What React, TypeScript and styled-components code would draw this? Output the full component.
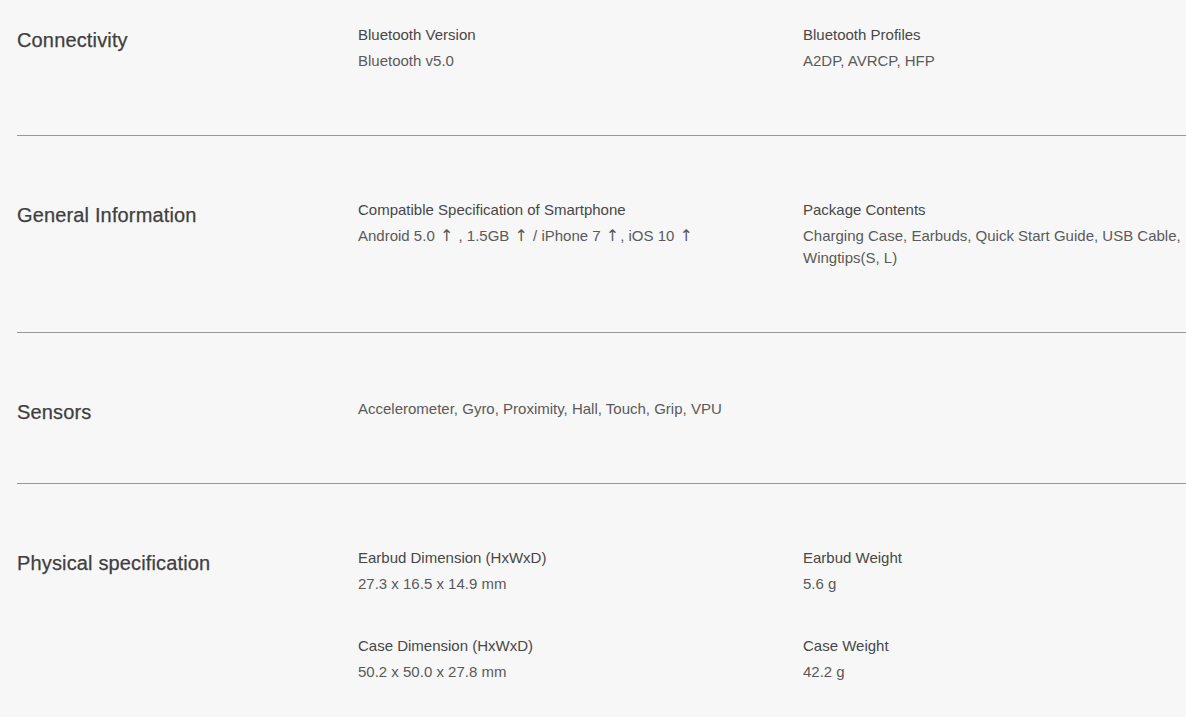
import React from "react";
import styled, { createGlobalStyle } from "styled-components";

const Global = createGlobalStyle`
  html, body { margin: 0; padding: 0; background: #f7f7f7; overflow: hidden; }
  body { font-family: "Liberation Sans", Arial, sans-serif; color: #4a4a4a; }
`;

const Page = styled.div`
  width: 1186px;
  padding-left: 17px;
  box-sizing: border-box;
`;

const Section = styled.section<{ $top?: number }>`
  display: grid;
  grid-template-columns: 341px 1fr;
  align-items: start;
  padding: ${(p) => p.$top ?? 63}px 0 63px;
  border-bottom: 1px solid #999;
`;

const Heading = styled.h3<{ $offset?: number }>`
  margin: ${(p) => p.$offset ?? 5}px 0 -${(p) => p.$offset ?? 5}px;
  font-size: 20px;
  line-height: 22px;
  font-weight: 400;
  letter-spacing: 0.15px;
  color: #3f3f3f;
  -webkit-text-stroke: 0.25px #3f3f3f;
`;

const Items = styled.div`
  display: grid;
  grid-template-columns: 445px 1fr;
  row-gap: 40px;
`;

const Item = styled.div<{ $span?: boolean }>`
  display: flex;
  flex-direction: column;
  gap: 4px;
  grid-column: ${(p) => (p.$span ? "1 / -1" : "auto")};
`;

const Label = styled.div`
  font-size: 15px;
  line-height: 22px;
  color: #474747;
`;

const Value = styled.div`
  font-size: 15px;
  line-height: 22px;
  color: #5a5a5a;
`;

const Arrow = styled.span`
  font-family: "DejaVu Sans", sans-serif;
  font-size: 16px;
  line-height: 0;
  margin: 0 1px;
`;

type Spec = { label?: string; value: React.ReactNode };
type Group = { title: string; items: Spec[]; top?: number; offset?: number };

const groups: Group[] = [
  {
    title: "Connectivity",
    top: 24,
    items: [
      { label: "Bluetooth Version", value: "Bluetooth v5.0" },
      { label: "Bluetooth Profiles", value: "A2DP, AVRCP, HFP" },
    ],
  },
  {
    title: "General Information",
    items: [
      {
        label: "Compatible Specification of Smartphone",
        value: (
          <>
            Android 5.0 <Arrow>↑</Arrow> , 1.5GB <Arrow>↑</Arrow> / iPhone 7 <Arrow>↑</Arrow>, iOS 10{" "}
            <Arrow>↑</Arrow>
          </>
        ),
      },
      {
        label: "Package Contents",
        value: "Charging Case, Earbuds, Quick Start Guide, USB Cable, Wingtips(S, L)",
      },
    ],
  },
  {
    title: "Sensors",
    top: 65,
    offset: 3,
    items: [{ value: "Accelerometer, Gyro, Proximity, Hall, Touch, Grip, VPU" }],
  },
  {
    title: "Physical specification",
    items: [
      { label: "Earbud Dimension (HxWxD)", value: "27.3 x 16.5 x 14.9 mm" },
      { label: "Earbud Weight", value: "5.6 g" },
      { label: "Case Dimension (HxWxD)", value: "50.2 x 50.0 x 27.8 mm" },
      { label: "Case Weight", value: "42.2 g" },
    ],
  },
];

export default function App() {
  return (
    <>
      <Global />
      <Page>
        {groups.map((g) => (
          <Section key={g.title} $top={g.top}>
            <Heading $offset={g.offset}>{g.title}</Heading>
            <Items>
              {g.items.map((it, i) => (
                <Item key={i} $span={!it.label}>
                  {it.label && <Label>{it.label}</Label>}
                  <Value>{it.value}</Value>
                </Item>
              ))}
            </Items>
          </Section>
        ))}
      </Page>
    </>
  );
}
